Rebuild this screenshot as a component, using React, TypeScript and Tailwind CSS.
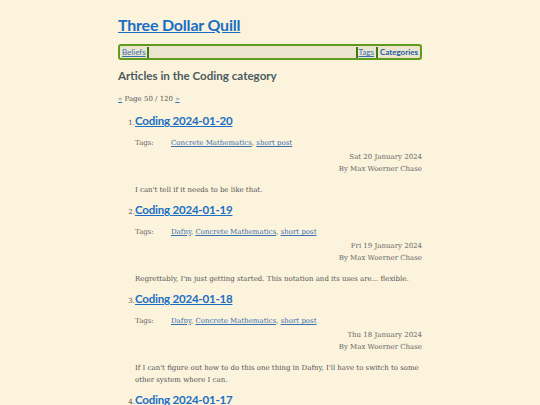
import React from "react";

const posts = [
  {
    n: 1,
    title: "Coding 2024-01-20",
    tags: ["Concrete Mathematics", "short post"],
    date: "Sat 20 January 2024",
    body: "I can't tell if it needs to be like that.",
  },
  {
    n: 2,
    title: "Coding 2024-01-19",
    tags: ["Dafny", "Concrete Mathematics", "short post"],
    date: "Fri 19 January 2024",
    body: "Regrettably, I'm just getting started. This notation and its uses are... flexible.",
  },
  {
    n: 3,
    title: "Coding 2024-01-18",
    tags: ["Dafny", "Concrete Mathematics", "short post"],
    date: "Thu 18 January 2024",
    body: "If I can't figure out how to do this one thing in Dafny, I'll have to switch to some other system where I can.",
  },
  {
    n: 4,
    title: "Coding 2024-01-17",
    tags: ["Dafny", "Concrete Mathematics", "short post"],
    date: "Wed 17 January 2024",
    body: "",
  },
];

const sans = "font-['Lato','Noto_Sans',sans-serif]";
const serif = "font-['DejaVu_Serif',serif]";

export default function App() {
  return (
    <div className="h-[405px] w-full overflow-hidden bg-[#fbf3dc] text-[#555]">
      <div className="mx-auto w-[304px] pt-[13px]">
        <h1 className={`${sans} text-[16px] font-bold leading-[24px] tracking-[-0.2px] text-[#1a6ec4] underline`}>
          Three Dollar Quill
        </h1>
        <nav className={`${sans} mt-[7px] flex h-[16px] items-center rounded-[3px] border-2 border-[#5f9b1e] bg-[#ebe4cf] px-[2px] text-[8px] leading-none`}>
          <a className="text-[#3a6fb0] underline">Beliefs</a>
          <span className="ml-[1px] h-[11px] w-[2px] bg-[#3d7a12]" />
          <div className="flex-1" />
          <span className="mr-[1px] h-[11px] w-[2px] bg-[#3d7a12]" />
          <a className="text-[#3a6fb0] underline">Tags</a>
          <span className="mx-[2px] h-[11px] w-[2px] bg-[#3d7a12]" />
          <a className="font-bold text-[#1f5c9e]">Categories</a>
        </nav>
        <h2 className={`${sans} mt-[7px] text-[11.6px] font-bold leading-[18px] text-[#4d5b60]`}>
          Articles in the Coding category
        </h2>
        <div className={`${serif} mt-[8px] text-[7px] leading-[12px] text-[#555]`}>
          <a className="text-[#3a6fb0] underline">«</a> Page 50 / 120{" "}
          <a className="text-[#3a6fb0] underline">»</a>
        </div>
        <ol className="mt-[7px]">
          {posts.map((p) => (
            <li key={p.n} className="mb-[5px]">
              <div className="flex items-baseline">
                <span className={`${serif} w-[17px] text-right text-[7px] text-[#555]`}>{p.n}.</span>
                <a className={`${sans} text-[11.5px] font-bold leading-[18px] tracking-[-0.2px] text-[#1a6ec4] underline`}>
                  {p.title}
                </a>
              </div>
              <div className={`${serif} ml-[17px] text-[7px] leading-[12px] text-[#666]`}>
                <div className="mt-[7px] mb-[2px] flex">
                  <span className="w-[36px]">Tags:</span>
                  <span>
                    {p.tags.map((t, i) => (
                      <React.Fragment key={t}>
                        <a className="text-[#3a6fb0] underline">{t}</a>
                        {i < p.tags.length - 1 ? ", " : ""}
                      </React.Fragment>
                    ))}
                  </span>
                </div>
                <div className="text-right">{p.date}</div>
                <div className="text-right">By Max Woerner Chase</div>
                <p className="mt-[9px] text-[#555]">{p.body}</p>
              </div>
            </li>
          ))}
        </ol>
      </div>
    </div>
  );
}
